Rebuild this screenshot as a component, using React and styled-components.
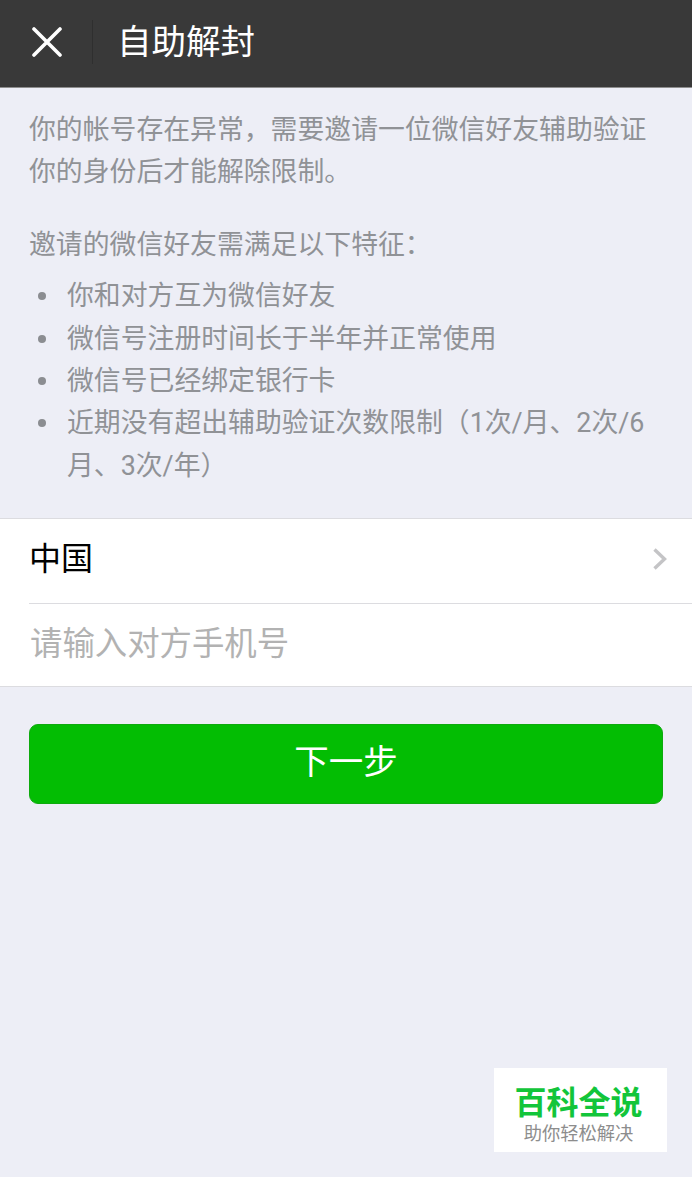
import styled, { createGlobalStyle } from "styled-components";

const GlobalStyle = createGlobalStyle`
  html, body {
    margin: 0;
    padding: 0;
    background: #edeef6;
  }
  body {
    font-family: Roboto, "Noto Sans CJK SC", "Liberation Sans", sans-serif;
  }
`;

const Page = styled.div`
  position: relative;
  width: 692px;
  height: 1177px;
  overflow: hidden;
  background: #edeef6;
`;

const TopBar = styled.header`
  display: flex;
  align-items: center;
  height: 84px;
  padding-bottom: 3px;
  background: #393939;
  border-bottom: 1px solid #8e8e8e;
`;

const CloseButton = styled.div`
  display: flex;
  align-items: center;
  justify-content: center;
  width: 90px;
  height: 44px;
  padding-left: 2px;
  border-right: 1px solid #2f2f2f;
`;

const Title = styled.h1`
  margin: 0 0 1px 24px;
  font-size: 34.5px;
  font-weight: 400;
  line-height: 44px;
  color: #fff;
`;

const Notice = styled.section`
  padding: 21px 29px 0;
  color: #909296;
  font-size: 26.85px;
  line-height: 42.4px;
`;

const Para = styled.p`
  margin: 0 0 30px;
`;

const Lead = styled.p`
  margin: 0 0 9px;
`;

const Bullets = styled.ul`
  margin: 0;
  padding: 0 0 0 38px;
  list-style: none;
`;

const Bullet = styled.li`
  position: relative;

  &::before {
    content: "";
    position: absolute;
    left: -29px;
    top: 17px;
    width: 8px;
    height: 8px;
    border-radius: 50%;
    background: #8b8d91;
  }
`;

const FormCard = styled.div`
  margin-top: 31px;
  background: #fff;
  border-top: 1px solid #dcdce0;
  border-bottom: 1px solid #dcdce0;
`;

const CountryRow = styled.div`
  box-sizing: border-box;
  display: flex;
  align-items: center;
  justify-content: space-between;
  height: 85px;
  margin-left: 29px;
  padding: 0 25px 4px 0;
  border-bottom: 1px solid #dcdce0;
  color: #000;
`;

const CountryName = styled.span`
  font-size: 32px;
  line-height: 44px;
`;

const PhoneRow = styled.div`
  box-sizing: border-box;
  display: flex;
  align-items: center;
  height: 82px;
  margin-left: 30px;
  padding-bottom: 9px;
  font-size: 32.4px;
  color: #b2b2b2;
`;

const Actions = styled.div`
  padding: 37px 29px 0;
`;

const NextButton = styled.button`
  display: block;
  width: 100%;
  height: 80px;
  padding: 0 0 4px;
  border: 1px solid #0eaa0e;
  border-radius: 9px;
  background: #03bd03;
  color: #fff;
  font-family: inherit;
  font-size: 34.5px;
  line-height: 1;
`;

const Watermark = styled.div`
  box-sizing: border-box;
  position: absolute;
  left: 494px;
  top: 1068px;
  display: flex;
  flex-direction: column;
  align-items: center;
  width: 173px;
  height: 84px;
  padding-right: 4px;
  background: #fff;
`;

const WatermarkName = styled.div`
  margin-top: 16px;
  font-size: 32px;
  font-weight: 700;
  line-height: 38px;
  color: #12c53a;
`;

const WatermarkSlogan = styled.div`
  margin-top: 1px;
  font-size: 18.3px;
  line-height: 22px;
  color: #8d8d8d;
`;

export default function App() {
  return (
    <Page>
      <GlobalStyle />
      <TopBar>
        <CloseButton>
          <svg width="30" height="30" viewBox="0 0 30 30" aria-hidden="true">
            <path
              d="M2 2 L28 28 M28 2 L2 28"
              stroke="#fff"
              strokeWidth="3.6"
              strokeLinecap="round"
              fill="none"
            />
          </svg>
        </CloseButton>
        <Title>自助解封</Title>
      </TopBar>

      <Notice>
        <Para>
          你的帐号存在异常，需要邀请一位微信好友辅助验证
          <br />
          你的身份后才能解除限制。
        </Para>
        <Lead>邀请的微信好友需满足以下特征：</Lead>
        <Bullets>
          <Bullet>你和对方互为微信好友</Bullet>
          <Bullet>微信号注册时间长于半年并正常使用</Bullet>
          <Bullet>微信号已经绑定银行卡</Bullet>
          <Bullet>近期没有超出辅助验证次数限制（1次/月、2次/6月、3次/年）</Bullet>
        </Bullets>
      </Notice>

      <FormCard>
        <CountryRow>
          <CountryName>中国</CountryName>
          <svg width="15" height="22" viewBox="0 0 15 22" aria-hidden="true">
            <path d="M2.5 1.5 L12.5 11 L2.5 20.5" stroke="#c4c4c6" strokeWidth="3.4" fill="none" />
          </svg>
        </CountryRow>
        <PhoneRow>请输入对方手机号</PhoneRow>
      </FormCard>

      <Actions>
        <NextButton>下一步</NextButton>
      </Actions>

      <Watermark>
        <WatermarkName>百科全说</WatermarkName>
        <WatermarkSlogan>助你轻松解决</WatermarkSlogan>
      </Watermark>
    </Page>
  );
}
